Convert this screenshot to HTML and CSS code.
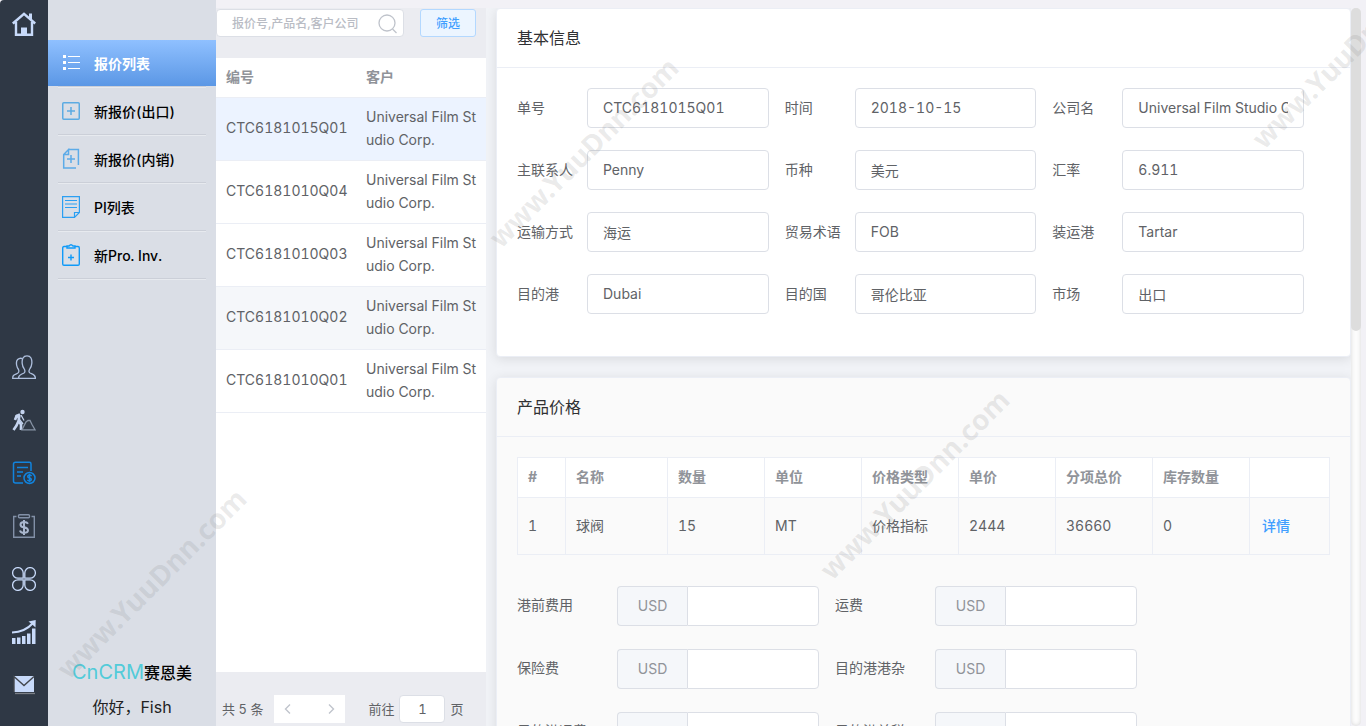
FILE: index.html
```html
<!DOCTYPE html>
<html lang="zh-CN">
<head>
<meta charset="utf-8">
<title>CnCRM赛恩美</title>
<link rel="stylesheet" href="styles.css">
</head>
<body>
<div class="app">
  <nav class="rail" aria-label="模块">
    <a href="#" class="rail-link" aria-label="首页"><svg viewBox="0 0 24 24"><path fill="none" stroke="#c8dafa" stroke-width="2.400" d="M.800 11.500L12 1.800L23.200 11.500M4 10V22.800H20V10"/><path fill="#c8dafa" d="M17 1.500H20V8L17 5.500ZM9 15.500H15V24H9Z"/></svg></a>
    <div class="rail-group">
      <a href="#" class="rail-link" aria-label="客户"><svg viewBox="0 0 24 24" fill="none" stroke="#aebfdd" stroke-width="1.300"><path d="M6.500 23.300H23.400C23.400 20 21.500 19.700 18 18C16.500 17 16.700 15.500 18 13.500C20 11 20.500 6 19 3C17.500 .200 12.500 .200 11 3C9.500 6 10 11 12 13.500C13.200 15.500 13.300 17 12 18C9 19.700 6.500 19.500 6.500 23.300Z"/><path d="M10.500 3.700C8.500 2.700 5.500 3.500 4.700 6C4 9 5 12.500 6.500 14.500C7.500 17 6.500 18 4.500 18.800C1.500 20 .700 20.500 .700 23.300H7"/></svg></a>
      <a href="#" class="rail-link" aria-label="跟进"><svg viewBox="0 0 24 24"><circle cx="10.500" cy="4" r="2.200" fill="#c4d3ee"/><path fill="none" stroke="#c4d3ee" stroke-width="2.600" d="M8 6.500L4.500 8L3 12M7.500 7L6.500 13L9 16.500V22M6.500 13L4.500 17.500L1.500 22"/><path fill="none" stroke="#c4d3ee" stroke-width="1.300" d="M9 7L12 12.500M4 7L11 16"/><path fill="none" stroke="#8793a5" stroke-width="1.300" d="M10 21.800L14 14L16 12.500H18L20 16.500L23 21.800Z"/></svg></a>
      <a href="#" class="rail-link" aria-label="报价"><svg viewBox="0 0 24 24" fill="none" stroke="#1184df" stroke-width="1.500"><path d="M11 22H3.500Q1.500 22 1.500 20V3Q1.500 1.300 3.500 1.300H17.500Q19 1.300 19 3V10M5 6.500H16M5 11H11M5 15H9"/><circle cx="17.500" cy="17" r="5.500"/><path d="M19.700 14.800Q17.500 13.400 16 14.500Q15 16.300 17.500 17Q20 17.700 19 19.300Q17.500 20.500 15.300 19.200M17.500 12.800V21.200"/></svg></a>
      <a href="#" class="rail-link" aria-label="财务"><svg viewBox="0 0 24 24" fill="none" stroke="#8290a7" stroke-width="1.400"><path d="M4.500 2.500H1.700V23.300H22.300V2.500H19.500"/><rect x="6.500" y=".800" width="11" height="3" rx="1"/><path stroke="#aab7ce" stroke-width="2" d="M16 9.700Q15 8 12 8Q8.500 8 8.500 10.700Q8.500 12.800 12 13.300Q16 14 16 16.500Q15.800 18.800 12 18.800Q8.500 18.800 8 16.500M12 6V21"/></svg></a>
      <a href="#" class="rail-link" aria-label="应用"><svg viewBox="0 0 24 24" fill="none" stroke="#c8dafa" stroke-width="1.300"><path d="M11.200 11.200H6A5.300 5.300 0 1 1 11.200 6ZM12.800 11.200H18A5.300 5.300 0 1 0 12.800 6ZM11.200 12.800H6A5.300 5.300 0 1 0 11.200 18ZM12.800 12.800H18A5.300 5.300 0 1 1 12.800 18Z"/></svg></a>
      <a href="#" class="rail-link" aria-label="统计"><svg viewBox="0 0 24 24"><path fill="#c8dafa" d="M0 18H3.500V24H0ZM5 17.500H8.500V24H5ZM10 16H13.500V24H10ZM15 13.500H18.500V24H15ZM20 8.500H23.500V24H20Z"/><path fill="none" stroke="#c8dafa" stroke-width="2" d="M0 12.500Q13 12 20.500 3.500"/><path fill="#c8dafa" d="M16.500 1.500L23.700 0L23.500 7.500L20.800 5Z"/></svg></a>
      <a href="#" class="rail-link" aria-label="邮件"><svg viewBox="0 0 24 24"><path fill="#c8dafa" d="M2 3H22V19H2Z"/><path fill="none" stroke="#43474d" stroke-width="1.400" d="M2 19V3.500L12 12.500L22 3.500"/><path stroke="#7c8087" stroke-width="1.300" d="M3 20.500H23"/></svg></a>
    </div>
  </nav>

  <aside class="side">
    <ul class="menu">
      <li><a href="#" class="menu-link active"><svg viewBox="0 0 18 22"><path stroke="#fff" stroke-width="1.200" d="M6 4.500H18M6 10.500H18M6 16.500H18"/><path fill="#fff" d="M1 3H4V6H1ZM1 9H4V12H1ZM1 15H4V18H1Z"/></svg>报价列表</a></li>
      <li><a href="#" class="menu-link"><svg viewBox="0 0 18 22" fill="none" stroke="#5cabe2" stroke-width="1.500"><rect x=".750" y="2.750" width="16.500" height="16.500" rx="1"/><path d="M5 11H13M9 7V15"/></svg>新报价(出口)</a></li>
      <li><a href="#" class="menu-link"><svg viewBox="0 0 18 22" fill="none" stroke="#5cabe8" stroke-width="1.500"><path d="M6.500 1.600H16.400V17M14 20H1.700V6.500L6.500 1.600V6.500H2M5 11H13M9 7V15"/></svg>新报价(内销)</a></li>
      <li><a href="#" class="menu-link"><svg viewBox="0 0 18 22" fill="none" stroke="#2b9ff2" stroke-width="1.200"><path d="M.600 .600H17.400V16.500L12.500 21.400H.600ZM17.400 16.500H12.500V21.400M3 4.500H15M3 8H15M3 11.500H15"/></svg>PI列表</a></li>
      <li><a href="#" class="menu-link"><svg viewBox="0 0 18 22" fill="none" stroke="#109af8" stroke-width="1.400"><path d="M5 2.500H2Q.700 2.500 .700 4V20Q.700 21.300 2 21.300H16Q17.300 21.300 17.300 20V4Q17.300 2.500 16 2.500H13M6 13.500H12M9 10.500V16.500M5 4V2H7Q9-.500 11 2H13V4Z"/></svg>新Pro. Inv.</a></li>
    </ul>
    <footer class="side-foot">
      <p class="brand"><span class="brand-en">CnCRM</span>赛恩美</p>
      <p class="hello">你好，Fish</p>
    </footer>
  </aside>

  <section class="list">
    <form class="search">
      <div class="search-box">
        <input type="text" aria-label="搜索" placeholder="报价号,产品名,客户公司">
        <svg viewBox="0 0 20 20" fill="none" stroke="#bfc3cb" stroke-width="1.300"><circle cx="9" cy="9" r="8"/><path d="M14.500 15L18.500 19"/></svg>
      </div>
      <button type="button" class="filter">筛选</button>
    </form>
    <div class="list-body">
      <table class="quotes">
        <thead><tr><th>编号</th><th>客户</th></tr></thead>
        <tbody>
          <tr class="current"><td>CTC6181015Q01</td><td>Universal Film Studio Corp.</td></tr>
          <tr><td>CTC6181010Q04</td><td>Universal Film Studio Corp.</td></tr>
          <tr><td>CTC6181010Q03</td><td>Universal Film Studio Corp.</td></tr>
          <tr class="hover"><td>CTC6181010Q02</td><td>Universal Film Studio Corp.</td></tr>
          <tr><td>CTC6181010Q01</td><td>Universal Film Studio Corp.</td></tr>
        </tbody>
      </table>
    </div>
    <div class="pager">
      <span>共 5 条</span>
      <div class="pager-nav">
        <button type="button" aria-label="上一页"><svg viewBox="0 0 12 12"><path d="M8 1.500L3.500 6L8 10.500"/></svg></button>
        <button type="button" aria-label="下一页"><svg viewBox="0 0 12 12"><path d="M4 1.500L8.500 6L4 10.500"/></svg></button>
      </div>
      <label class="jump">前往<input type="text" value="1">页</label>
    </div>
  </section>

  <main class="main">
    <section class="card">
      <h2 class="card-head">基本信息</h2>
      <form class="card-body info">
        <div class="field"><label for="f1">单号</label><input id="f1" type="text" value="CTC6181015Q01"></div>
        <div class="field"><label for="f2">时间</label><input id="f2" type="text" value="2018-10-15"></div>
        <div class="field"><label for="f3">公司名</label><input id="f3" type="text" value="Universal Film Studio Corp."></div>
        <div class="field"><label for="f4">主联系人</label><input id="f4" type="text" value="Penny"></div>
        <div class="field"><label for="f5">币种</label><input id="f5" type="text" value="美元"></div>
        <div class="field"><label for="f6">汇率</label><input id="f6" type="text" value="6.911"></div>
        <div class="field"><label for="f7">运输方式</label><input id="f7" type="text" value="海运"></div>
        <div class="field"><label for="f8">贸易术语</label><input id="f8" type="text" value="FOB"></div>
        <div class="field"><label for="f9">装运港</label><input id="f9" type="text" value="Tartar"></div>
        <div class="field"><label for="f10">目的港</label><input id="f10" type="text" value="Dubai"></div>
        <div class="field"><label for="f11">目的国</label><input id="f11" type="text" value="哥伦比亚"></div>
        <div class="field"><label for="f12">市场</label><input id="f12" type="text" value="出口"></div>
      </form>
    </section>
    <section class="card card-soft">
      <h2 class="card-head">产品价格</h2>
      <div class="card-body">
        <table class="prices">
          <colgroup><col class="c-no"><col class="c-name"><col><col><col><col><col><col><col class="c-act"></colgroup>
          <thead><tr><th>#</th><th>名称</th><th>数量</th><th>单位</th><th>价格类型</th><th>单价</th><th>分项总价</th><th>库存数量</th><th></th></tr></thead>
          <tbody><tr><td>1</td><td>球阀</td><td>15</td><td>MT</td><td>价格指标</td><td>2444</td><td>36660</td><td>0</td><td><a href="#">详情</a></td></tr></tbody>
        </table>
        <form class="fees">
          <div class="fee"><label for="g1">港前费用</label><div class="group"><span>USD</span><input id="g1" type="text"></div></div>
          <div class="fee"><label for="g2">运费</label><div class="group"><span>USD</span><input id="g2" type="text"></div></div>
          <div class="fee"><label for="g3">保险费</label><div class="group"><span>USD</span><input id="g3" type="text"></div></div>
          <div class="fee"><label for="g4">目的港港杂</label><div class="group"><span>USD</span><input id="g4" type="text"></div></div>
          <div class="fee"><label for="g5">目的港运费</label><div class="group"><span>USD</span><input id="g5" type="text"></div></div>
          <div class="fee"><label for="g6">目的港关税</label><div class="group"><span>USD</span><input id="g6" type="text"></div></div>
        </form>
      </div>
    </section>
  </main>
  <div class="scroll"><div class="scroll-thumb"></div></div>

  <div class="marks" aria-hidden="true">
    <span class="mark m1">www.YuuDnn.com</span>
    <span class="mark m2">www.YuuDnn.com</span>
    <span class="mark m3">www.YuuDnn.com</span>
    <span class="mark m4">www.YuuDnn.com</span>
  </div>
</div>
</body>
</html>
```
FILE: styles.css
```css
* { box-sizing: border-box; }
body {
  margin: 0;
  background: #f2f1f6;
  color: #606266;
  font: 14px/23px Inter, "Noto Sans CJK SC", sans-serif;
  font-variant-numeric: tabular-nums;
}
h2, p, ul { margin: 0; padding: 0; font-weight: 400; }
ul { list-style: none; }
a { text-decoration: none; }
input, button { font: inherit; font-variant-numeric: inherit; color: inherit; }
input {
  min-width: 0;
  background: #fff;
  border: 1px solid #dcdfe6;
  border-radius: 4px;
}
.app {
  position: relative;
  display: flex;
  height: 100vh;
  overflow: hidden;
}

/* icon rail */
.rail {
  display: flex;
  flex-direction: column;
  align-items: center;
  justify-content: space-between;
  flex: 0 0 48px;
  padding: 12px 0 29px;
  background: #2f3845;
  border-top-left-radius: 4px;
}
.rail-group { display: grid; gap: 29px; }
.rail-link, .rail-link svg { display: block; width: 24px; height: 24px; }

/* side menu */
.side {
  display: flex;
  flex-direction: column;
  justify-content: space-between;
  flex: 0 0 168px;
  padding-top: 40px;
  background: #dadee6;
}
.menu-link {
  position: relative;
  display: flex;
  align-items: center;
  gap: 14px;
  height: 48px;
  padding: 0 0 2px 14px;
  color: #000;
  font-weight: 500;
}
.menu-link::after {
  content: "";
  position: absolute;
  left: 10px;
  right: 10px;
  bottom: 0;
  height: 2px;
  background: linear-gradient(#cbcfd8 50%, #e7eaef 50%);
}
.menu-link svg { width: 18px; height: 22px; }
.active {
  color: #fff;
  font-weight: 700;
  background: linear-gradient(#8fc0ff, #5b97e5) 0 0 / 100% 46px no-repeat;
}
.side-foot { text-align: center; padding-bottom: 6px; }
.brand { margin-bottom: 3px; color: #000; font-size: 16px; font-weight: 500; line-height: 36px; }
.brand-en { color: #52cbd9; font-size: 20px; font-weight: 400; }
.hello { color: #222; font-size: 16px; line-height: 26px; }

/* quote list */
.list {
  display: flex;
  flex-direction: column;
  flex: 0 0 270px;
  margin-top: 8px;
  background: #ebecf1;
}
.search {
  display: flex;
  gap: 16px;
  padding: 1px 10px 21px 0;
  font-size: 12px;
}
.search-box { position: relative; display: flex; flex: 1; }
.search-box input { width: 100%; height: 28px; padding: 0 34px 0 15px; }
.search-box input::placeholder { color: #b9bcc4; font-weight: 500; }
.search-box svg { position: absolute; right: 6px; top: 5px; width: 20px; height: 20px; }
.filter {
  width: 56px;
  height: 28px;
  padding: 0;
  color: #409eff;
  font-weight: 500;
  background: #ecf5ff;
  border: 1px solid #b3d8ff;
  border-radius: 3px;
}
.list-body { flex: 1; background: #fff; }
table { width: 100%; border-collapse: collapse; table-layout: fixed; }
th { color: #909399; font-weight: 700; text-align: left; }
.quotes th { height: 39px; padding: 0 10px 2px; border-bottom: 1px solid #ebeef5; }
.quotes td {
  height: 63px;
  padding: 7px 10px 9px;
  border-bottom: 1px solid #ebeef5;
  word-break: break-all;
}
.quotes th:first-child { width: 140px; }
.quotes td:first-child { padding-right: 0; }
.quotes th + th, .quotes td + td { padding-right: 8px; }
.current { background: #ecf3ff; }
.hover { background: #f5f7fa; }
.pager {
  display: flex;
  align-items: center;
  height: 54px;
  padding: 20px 0 0 6px;
  font-size: 13px;
  white-space: nowrap;
}
.pager-nav { display: flex; gap: 15px; margin: 0 23px 0 11px; background: #fff; }
.pager-nav button { width: 28px; height: 28px; padding: 0; background: #fff; border: 0; }
.pager-nav svg { display: block; width: 12px; height: 12px; margin: auto; fill: none; stroke: #c0c4cc; stroke-width: 1.400; }
.jump { display: flex; align-items: center; gap: 5px; }
.jump input { width: 46px; height: 28px; padding: 0; text-align: center; }

/* detail */
.main {
  flex: 1;
  min-width: 0;
  margin-top: 8px;
  padding-left: 10px;
  overflow: hidden;
  background: #f1f3f7;
}
.card {
  margin-bottom: 20px;
  background: #fff;
  border: 1px solid #ebeef5;
  border-radius: 4px;
  box-shadow: 0 2px 12px rgba(0, 0, 0, .1);
}
.card-soft { background: #fafafa; }
.card-head {
  padding: 18px 20px;
  color: #303133;
  font-size: 16px;
  line-height: 22px;
  border-bottom: 1px solid #ebeef5;
}
.card-body { padding: 20px; }
.info { display: grid; grid-template-columns: repeat(3, minmax(0, 1fr)); row-gap: 22px; padding: 20px 30px 42px 20px; }
.field { display: flex; align-items: center; padding-right: 16px; }
.field label { flex: 0 0 70px; padding-bottom: 2px; }
.field input { flex: 1; height: 40px; padding: 0 15px 1px; }
.prices th, .prices td { padding: 0 10px 2px; border: 1px solid #ebeef5; }
.prices th { height: 40px; background: #fff; }
.prices td { height: 57px; }
.prices a { padding-left: 2px; color: #409eff; font-weight: 500; }
.c-no { width: 48px; }
.c-name { width: 102px; }
.c-act { width: 80px; }
.fees { display: grid; grid-template-columns: repeat(auto-fill, 302px); gap: 23px 16px; max-width: 640px; margin-top: 31px; }
.fee { display: flex; align-items: center; }
.fee label { flex: 0 0 100px; padding-bottom: 4px; }
.group { display: flex; flex: 1; min-width: 0; }
.group span {
  flex: 0 0 70px;
  line-height: 38px;
  text-align: center;
  color: #909399;
  background: #f5f7fa;
  border: 1px solid #dcdfe6;
  border-right: 0;
  border-radius: 4px 0 0 4px;
}
.group input { flex: 1; height: 40px; padding: 0 15px; border-radius: 0 4px 4px 0; }
.scroll {
  flex: 0 0 10px;
  margin: 8px 5px 0 0;
  background: #fcfcfc;
  border-radius: 5px;
  box-shadow: inset 0 0 4px rgba(0, 0, 0, .15);
}
.scroll-thumb { height: 45%; background: #ddd; border-radius: 5px; }

/* watermark */
.marks { position: absolute; inset: 0; overflow: hidden; pointer-events: none; }
.mark {
  position: absolute;
  width: 260px;
  text-align: center;
  color: rgba(128, 128, 128, .16);
  font: 700 28px/36px "Noto Sans", sans-serif;
  transform: rotate(-45deg);
}
.m1 { left: 21px; top: 565px; }
.m2 { left: 453px; top: 134px; }
.m3 { left: 784px; top: 466px; }
.m4 { left: 1216px; top: 35px; }
```
